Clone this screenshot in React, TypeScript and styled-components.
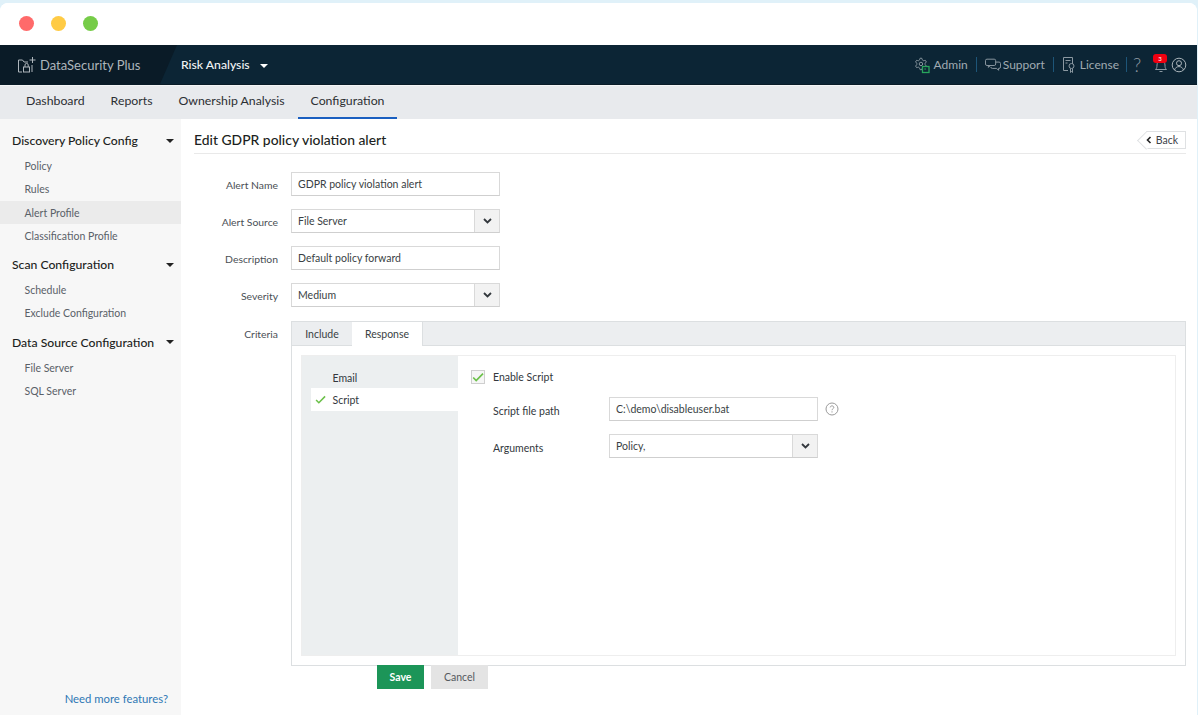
import React from "react";
import styled, { createGlobalStyle } from "styled-components";

const Global = createGlobalStyle`
  html, body { margin: 0; padding: 0; background: #ffffff; }
  body { font-family: Lato, "Open Sans", "Liberation Sans", sans-serif; overflow: hidden; }
  * { box-sizing: border-box; }
`;

const Page = styled.div`
  width: 1198px; height: 715px; background: #e0f1f9; padding-top: 3px; overflow: hidden;
`;
const Frame = styled.div`
  width: 1197px; height: 712px; background: #fff; border-radius: 8px 8px 0 0; overflow: hidden;
  display: flex; flex-direction: column;
`;
const TitleBar = styled.div`
  height: 42px; flex: none; display: flex; align-items: center; gap: 17px; padding: 0 0 0 19px; background: #fff;
`;
const Dot = styled.span<{ $c: string }>`
  width: 15px; height: 15px; border-radius: 50%; background: ${p => p.$c}; display: block; margin-top: -1px;
`;
const Header = styled.header`
  height: 40px; flex: none; background: #0c2535; display: flex; align-items: center; color: #fff; position: relative;
  border-bottom: 1px solid #0a1c28;
`;
const Brand = styled.div`
  width: 177px; height: 100%; background: #0a1b27; clip-path: polygon(0 0, 100% 0, 160px 100%, 0 100%);
  display: flex; align-items: center; padding-left: 16px; gap: 4px;
  color: #aeb6bc; font-size: 13px;
`;
const Module = styled.div`
  display: flex; align-items: center; margin-left: 4px; font-size: 12.2px; font-weight: 500; color: #f2f4f5;
`;
const Caret = styled.span<{ $c?: string; $w?: number }>`
  display: inline-block; width: 0; height: 0;
  border-left: ${p => p.$w ?? 4}px solid transparent; border-right: ${p => p.$w ?? 4}px solid transparent;
  border-top: ${p => p.$w ?? 4}px solid ${p => p.$c ?? "#fff"};
`;
const CaretWrap = styled.span`
  margin-left: 10px; display: inline-flex; margin-top: 3px;
`;
const HeaderRight = styled.div`
  margin-left: auto; display: flex; align-items: center; padding-right: 10px; color: #a0abb2; font-size: 12px; height: 100%;
`;
const HeadLink = styled.div<{ $gap?: number }>`
  display: flex; align-items: center; gap: ${p => p.$gap ?? 4}px;
`;
const Sep = styled.span<{ $l?: number; $r?: number }>`
  width: 1px; height: 15px; background: #1d5578; margin: 0 ${p => p.$r ?? 8}px 0 ${p => p.$l ?? 8}px;
`;
const Bell = styled.div`
  position: relative; width: 18px; height: 18px; margin-left: 11px;
`;
const Badge = styled.span`
  position: absolute; top: -2px; left: 0; width: 14px; height: 9px; border-radius: 3px; background: #f00010;
  color: #fff; font-size: 6px; line-height: 9px; text-align: center;
`;
const Nav = styled.nav`
  height: 34px; flex: none; background: #e8eaed; display: flex; padding-left: 13px; border-top: 1px solid #f4f5f6;
`;
const NavItem = styled.div<{ $active?: boolean }>`
  padding: 0 13px; font-size: 12.3px; line-height: 30px; color: #2c2f33; height: 33px;
  border-bottom: 2px solid ${p => (p.$active ? "#1a5fc0" : "transparent")};
`;
const Body = styled.div`
  flex: 1; display: flex; min-height: 0;
`;
const Side = styled.aside`
  width: 181px; flex: none; background: #f7f7f7; padding-top: 10px; display: flex; flex-direction: column;
`;
const SideHead = styled.div`
  height: 23px; display: flex; align-items: center; justify-content: space-between; padding: 0 7px 0 12px;
  font-size: 12.2px; font-weight: 500; color: #1b1d20; margin-bottom: 2px;
`;
const SideItem = styled.div<{ $active?: boolean }>`
  height: 23.3px; line-height: 25px; padding-left: 24.5px; font-size: 10.5px; color: #5a6168;
  background: ${p => (p.$active ? "#ebebeb" : "transparent")};
`;
const SideGap = styled.div`
  height: 6px; flex: none;
`;
const More = styled.div`
  margin-top: auto; text-align: right; padding: 0 13px 10px 0; font-size: 11.3px; color: #2f78b5;
`;
const Main = styled.main`
  flex: 1; padding: 12px 11px 0 13px; min-width: 0;
`;
const TitleRow = styled.div`
  height: 23px; display: flex; justify-content: space-between; align-items: flex-start; border-bottom: 1px solid #e9e9e9;
`;
const Title = styled.h1`
  margin: -1px 0 0; font-size: 13.9px; line-height: 19px; font-weight: 500; color: #1c1f22;
`;
const Back = styled.div`
  width: 40px; height: 18px; display: flex; align-items: center; justify-content: flex-end; gap: 4px; padding-right: 7px;
  font-size: 10.5px; color: #3c4248; position: relative; border: 1px solid #dfe1e3; border-left: 0; background: #fff;
  &::before {
    content: ""; position: absolute; left: -6px; top: 2px; width: 11.500px; height: 11.500px; transform: rotate(45deg);
    border-left: 1px solid #dfe1e3; border-bottom: 1px solid #dfe1e3; background: #fff;
  }
`;
const BackIcon = styled.span`
  position: relative; display: inline-flex;
`;
const Form = styled.div`
  padding-top: 18px; display: flex; flex-direction: column;
`;
const Row = styled.div`
  display: flex; align-items: flex-start; margin-bottom: 13px;
  &:last-child { margin-bottom: -1px; }
`;
const Label = styled.div<{ $lh?: number }>`
  width: 84px; height: 24px; text-align: right; font-size: 10.4px; line-height: ${p => p.$lh ?? 26}px; color: #4a4f55; margin-right: 13px; flex: none;
`;
const Field = styled.div<{ $w?: number }>`
  width: ${p => p.$w ?? 209}px; height: 24px; border: 1px solid #d9d9d9; border-bottom-color: #cfcfcf; background: #fff;
  display: flex; align-items: stretch; font-size: 10.5px; color: #3a3f44; line-height: 22px;
`;
const FieldText = styled.span`
  flex: 1; padding-left: 6px;
`;
const SelectBtn = styled.span`
  width: 25px; flex: none; background: #f2f2f2; border-left: 1px solid #d9d9d9; display: flex; align-items: center; justify-content: center;
`;
const Tabs = styled.div`
  flex: 1; min-width: 0; height: 345px; border: 1px solid #dcdfe1; display: flex; flex-direction: column; margin-top: 1px;
`;
const TabBar = styled.div`
  height: 24px; flex: none; background: #eceef0; display: flex; border-bottom: 1px solid #dcdfe1;
`;
const Tab = styled.div<{ $active?: boolean; $w: number }>`
  width: ${p => p.$w}px; text-align: center; font-size: 10.5px; line-height: 25px; color: #3a3f44; height: 24px;
  background: ${p => (p.$active ? "#fff" : "transparent")};
  border-right: ${p => (p.$active ? "1px solid #dcdfe1" : "0")};
`;
const TabBody = styled.div`
  flex: 1; padding: 9px; display: flex; min-height: 0;
`;
const Inner = styled.div`
  flex: 1; border: 1px solid #eeeeee; display: flex; min-width: 0;
`;
const SubList = styled.div`
  width: 156px; flex: none; background: #eceff0; padding: 10px 0 0 9px;
`;
const SubItem = styled.div<{ $active?: boolean }>`
  height: ${p => (p.$active ? 23 : 22)}px; display: flex; align-items: center; font-size: 10.5px; color: #33383d;
  padding-left: ${p => (p.$active ? "4px" : "21.500px")};
  padding-top: ${p => (p.$active ? "0" : "2px")};
  gap: 6.500px; background: ${p => (p.$active ? "#fff" : "transparent")};
`;
const Pane = styled.div`
  flex: 1; padding: 11px 0 0 13px; min-width: 0;
`;
const CheckRow = styled.div`
  display: flex; align-items: center; height: 20px; gap: 8px; font-size: 10.5px; color: #33383d; margin-bottom: 10px;
`;
const CheckBox = styled.span`
  width: 14px; height: 14px; border: 1px solid #cfcfcf; background: #f6f6f6; display: flex; align-items: center; justify-content: center;
`;
const PaneRow = styled.div`
  display: flex; align-items: center; padding-left: 22px; margin-bottom: 13px;
`;
const PaneLabel = styled.div`
  width: 116px; flex: none; font-size: 10.5px; color: #33383d; padding-top: 4px;
`;
const Help = styled.span`
  margin-left: 6.500px; display: inline-flex;
`;
const Buttons = styled.div`
  display: flex; gap: 7px; padding-left: 183px;
`;
const Btn = styled.div<{ $primary?: boolean; $w: number }>`
  width: ${p => p.$w}px; height: 24px; text-align: center; line-height: 25px; font-size: 10.5px;
  background: ${p => (p.$primary ? "#1c9558" : "#e4e4e4")};
  color: ${p => (p.$primary ? "#fff" : "#55595e")};
  font-weight: ${p => (p.$primary ? 700 : 400)};
`;
const QuestionMark = styled.span`
  font-size: 19px; font-weight: 300; color: #8b98a1; line-height: 1; margin-left: 1px; width: 9px;
`;

const Chevron = () => (
  <svg width="9" height="6" viewBox="0 0 9 6"><path d="M1 1l3.5 3.5L8 1" fill="none" stroke="#33383d" strokeWidth="1.8" /></svg>
);
const Check = ({ size = 12 }: { size?: number }) => (
  <svg width={size} height={size} viewBox="0 0 12 12"><path d="M1.2 6.5l3 3L11 2.6" fill="none" stroke="#6cc04a" strokeWidth="1.7" /></svg>
);
const Select = ({ text, w }: { text: string; w?: number }) => (
  <Field $w={w}><FieldText>{text}</FieldText><SelectBtn><Chevron /></SelectBtn></Field>
);

const C = "#8b98a1";
const LogoIcon = () => (
  <svg width="20" height="20" viewBox="0 0 20 20" fill="none" stroke="#aeb6bc" strokeWidth="1">
    <path d="M6 17H2.5V5h4l1.500 2h4" />
    <rect x="7.500" y="12" width="6" height="5" />
    <path d="M9 12v-2a1.600 1.600 0 0 1 3.200 0v2" />
    <path d="M16 17v-7M16.500 2v6M13.500 5h6" />
  </svg>
);
const GearIcon = () => (
  <svg width="16" height="18" viewBox="0 0 16 18" fill="none">
    <g transform="translate(0 1) scale(0.58)" stroke={C} strokeWidth="1.700">
      <path d="M12.220 2h-.44a2 2 0 0 0-2 2v.18a2 2 0 0 1-1 1.730l-.43.25a2 2 0 0 1-2 0l-.15-.08a2 2 0 0 0-2.730.73l-.22.38a2 2 0 0 0 .73 2.730l.15.1a2 2 0 0 1 1 1.720v.51a2 2 0 0 1-1 1.740l-.15.09a2 2 0 0 0-.73 2.730l.22.38a2 2 0 0 0 2.730.73l.15-.08a2 2 0 0 1 2 0l.43.25a2 2 0 0 1 1 1.730V20a2 2 0 0 0 2 2h.44a2 2 0 0 0 2-2v-.18a2 2 0 0 1 1-1.730l.43-.25a2 2 0 0 1 2 0l.15.08a2 2 0 0 0 2.730-.73l.22-.39a2 2 0 0 0-.73-2.730l-.15-.08a2 2 0 0 1-1-1.740v-.5a2 2 0 0 1 1-1.740l.15-.09a2 2 0 0 0 .73-2.730l-.22-.38a2 2 0 0 0-2.730-.73l-.15.08a2 2 0 0 1-2 0l-.43-.25a2 2 0 0 1-1-1.730V4a2 2 0 0 0-2-2z" />
      <circle cx="12" cy="12" r="3" />
    </g>
    <rect x="8.500" y="10.500" width="6.500" height="6" fill="#0c2535" stroke="#28a55c" strokeWidth="1.300" />
    <path d="M10.300 13h1.800" stroke="#28a55c" />
  </svg>
);
const ChatIcon = () => (
  <svg width="16" height="14" viewBox="0.500 2 16.500 14" fill="none" stroke={C}>
    <rect x="1" y="3" width="10.500" height="6.500" rx="1.500" />
    <path d="M4 9.500v2l2-2M11.500 6H15a1.500 1.500 0 0 1 1.500 1.500V11A1.500 1.500 0 0 1 15 12.500h-.5v2l-2-2H8a1.500 1.500 0 0 1-1.500-1.500" />
  </svg>
);
const LicenseIcon = () => (
  <svg width="14" height="18" viewBox="0 0 14 18" fill="none" stroke={C}>
    <path d="M6 14.500H1.500v-13h9V8" />
    <path d="M3.500 4.500h5M3.500 7h2" />
    <circle cx="9.500" cy="10" r="2.500" />
    <path d="M8.500 12.500v4l1-1 1 1v-4" />
  </svg>
);
const BellIcon = () => (
  <svg width="18" height="18" viewBox="0 0 18 18" fill="none" stroke={C}>
    <path d="M2.500 13.500c1.300-1.200 1.500-2.300 1.500-4.500 0-2.600 1.700-4.500 4-4.500s4 1.900 4 4.500c0 2.200.2 3.300 1.500 4.500zM6.500 15.500h3" />
  </svg>
);
const UserIcon = () => (
  <svg width="16" height="16" viewBox="0 0 16 16" fill="none" stroke="#aab4ba">
    <circle cx="8" cy="8" r="6.800" />
    <circle cx="8" cy="6.200" r="2.500" />
    <path d="M3.500 13c.8-2.400 2.500-3.400 4.500-3.400s3.700 1 4.500 3.400" />
  </svg>
);
const HelpIcon = () => (
  <svg width="14" height="14" viewBox="0 0 14 14" fill="none">
    <circle cx="7" cy="7" r="6" stroke="#9a9a9a" />
    <path d="M5.200 5.400C5.300 4.400 6 3.900 7 3.900s1.800.6 1.800 1.500c0 1.300-1.800 1.400-1.800 2.800M7 9.300v1.200" stroke="#9a9a9a" />
  </svg>
);

export default function App() {
  return (
    <Page>
      <Global />
      <Frame>
        <TitleBar>
          <Dot $c="#ff6a6a" />
          <Dot $c="#ffcb45" />
          <Dot $c="#76cc48" />
        </TitleBar>
        <Header>
          <Brand><LogoIcon />DataSecurity Plus</Brand>
          <Module>Risk Analysis<CaretWrap><Caret /></CaretWrap></Module>
          <HeaderRight>
            <HeadLink><GearIcon />Admin</HeadLink>
            <Sep />
            <HeadLink $gap={2}><ChatIcon />Support</HeadLink>
            <Sep />
            <HeadLink><LicenseIcon />License</HeadLink>
            <Sep $l={7} $r={5} />
            <QuestionMark>?</QuestionMark>
            <Bell><BellIcon /><Badge>3</Badge></Bell>
            <UserIcon />
          </HeaderRight>
        </Header>
        <Nav>
          <NavItem>Dashboard</NavItem>
          <NavItem>Reports</NavItem>
          <NavItem>Ownership Analysis</NavItem>
          <NavItem $active>Configuration</NavItem>
        </Nav>
        <Body>
          <Side>
            <SideHead>Discovery Policy Config<Caret $c="#222" /></SideHead>
            <SideItem>Policy</SideItem>
            <SideItem>Rules</SideItem>
            <SideItem $active>Alert Profile</SideItem>
            <SideItem>Classification Profile</SideItem>
            <SideGap />
            <SideHead>Scan Configuration<Caret $c="#222" /></SideHead>
            <SideItem>Schedule</SideItem>
            <SideItem>Exclude Configuration</SideItem>
            <SideGap />
            <SideHead>Data Source Configuration<Caret $c="#222" /></SideHead>
            <SideItem>File Server</SideItem>
            <SideItem>SQL Server</SideItem>
            <More>Need more features?</More>
          </Side>
          <Main>
            <TitleRow>
              <Title>Edit GDPR policy violation alert</Title>
              <Back>
                <BackIcon>
                  <svg width="6" height="8" viewBox="0 0 6 8"><path d="M4.500 1L1.500 4l3 3" fill="none" stroke="#222" strokeWidth="1.600" /></svg>
                </BackIcon>
                Back
              </Back>
            </TitleRow>
            <Form>
              <Row><Label>Alert Name</Label><Field><FieldText>GDPR policy violation alert</FieldText></Field></Row>
              <Row><Label>Alert Source</Label><Select text="File Server" /></Row>
              <Row><Label>Description</Label><Field><FieldText>Default policy forward</FieldText></Field></Row>
              <Row><Label>Severity</Label><Select text="Medium" /></Row>
              <Row>
                <Label $lh={28}>Criteria</Label>
                <Tabs>
                  <TabBar>
                    <Tab $w={60}>Include</Tab>
                    <Tab $active $w={71}>Response</Tab>
                  </TabBar>
                  <TabBody>
                    <Inner>
                      <SubList>
                        <SubItem>Email</SubItem>
                        <SubItem $active><Check size={11} />Script</SubItem>
                      </SubList>
                      <Pane>
                        <CheckRow><CheckBox><Check /></CheckBox>Enable Script</CheckRow>
                        <PaneRow>
                          <PaneLabel>Script file path</PaneLabel>
                          <Field><FieldText>C:\demo\disableuser.bat</FieldText></Field>
                          <Help><HelpIcon /></Help>
                        </PaneRow>
                        <PaneRow>
                          <PaneLabel>Arguments</PaneLabel>
                          <Select text="Policy," />
                        </PaneRow>
                      </Pane>
                    </Inner>
                  </TabBody>
                </Tabs>
              </Row>
            </Form>
            <Buttons>
              <Btn $primary $w={47}>Save</Btn>
              <Btn $w={57}>Cancel</Btn>
            </Buttons>
          </Main>
        </Body>
      </Frame>
    </Page>
  );
}
